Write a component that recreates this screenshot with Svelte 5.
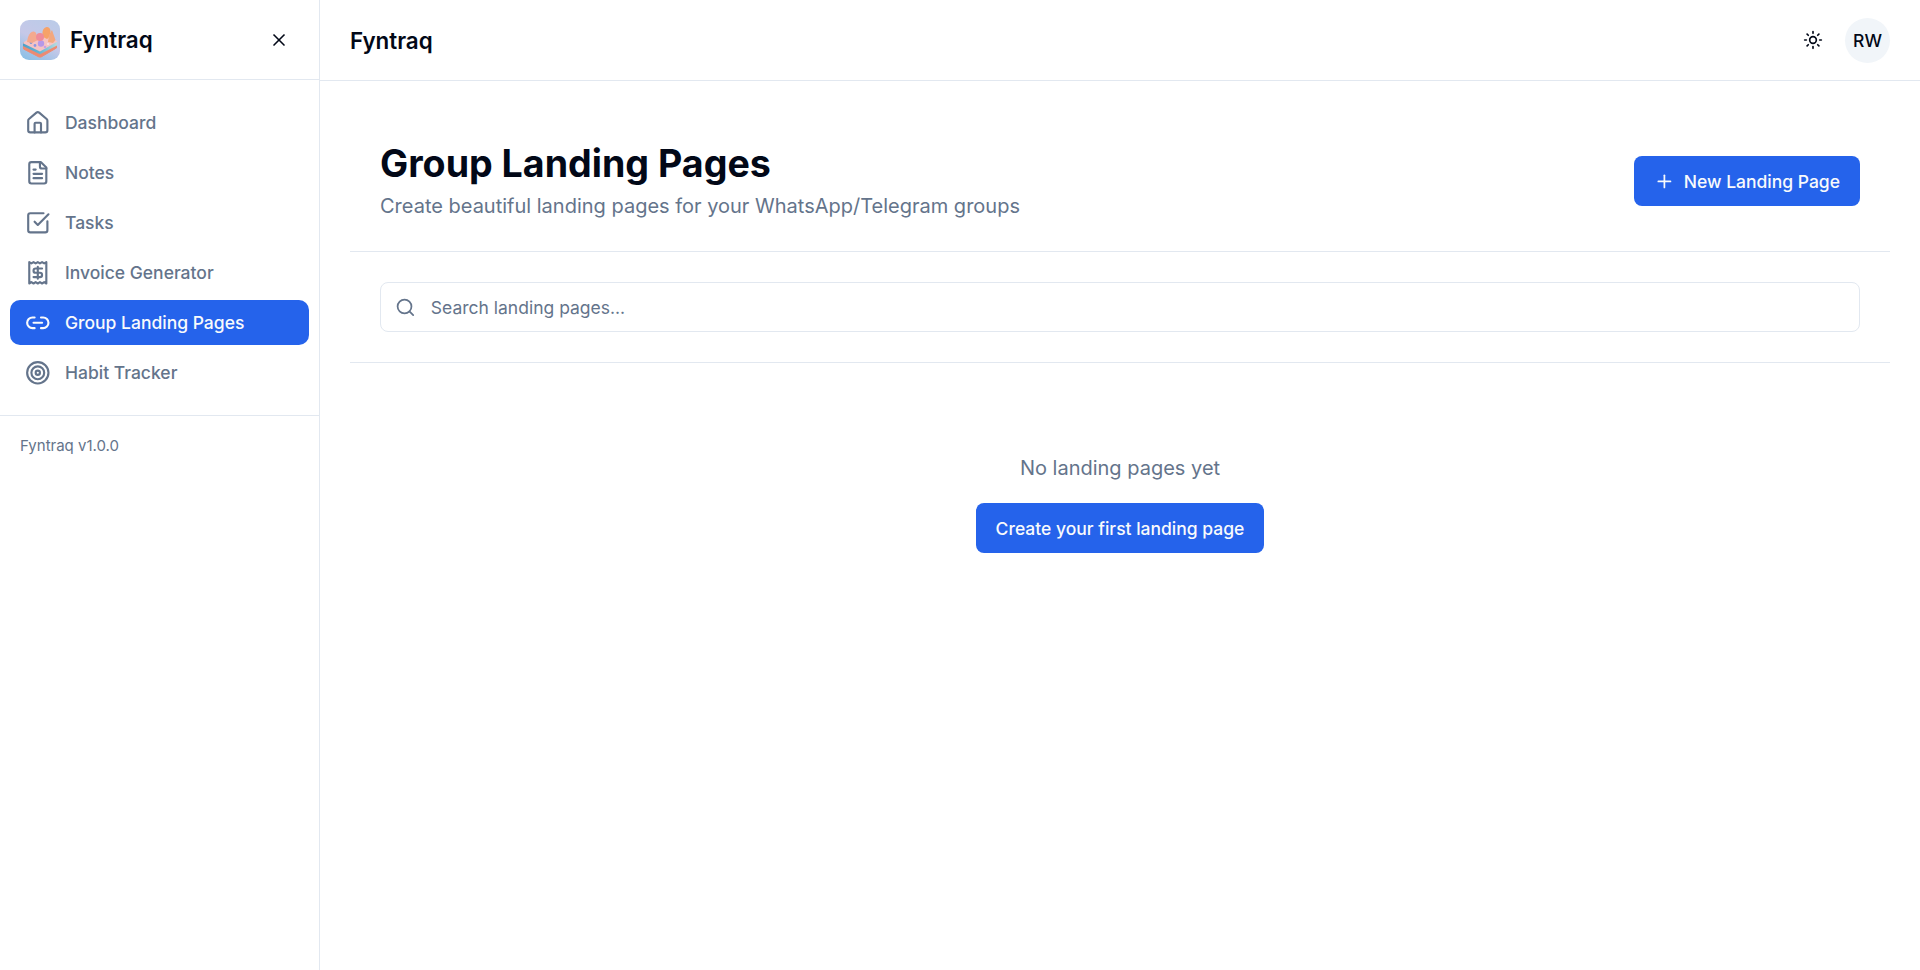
<script>
  const nav = ['Dashboard', 'Notes', 'Tasks', 'Invoice Generator', 'Group Landing Pages', 'Habit Tracker'];
</script>

<div class="shell">
  <aside class="sidebar">
    <div class="brand">
      <div class="brand-left">
        <svg class="logo" viewBox="0 0 40 40" aria-hidden="true">
          <defs>
            <linearGradient id="lg" x1="0.7" y1="0" x2="0.2" y2="1">
              <stop offset="0" stop-color="#bccbe8" />
              <stop offset="0.5" stop-color="#c6c8e8" />
              <stop offset="1" stop-color="#8dc0e6" />
            </linearGradient>
            <linearGradient id="lg2" x1="0" y1="0" x2="1" y2="0">
              <stop offset="0" stop-color="#4f9fc8" />
              <stop offset="0.5" stop-color="#66b6d2" />
              <stop offset="1" stop-color="#b5dadf" />
            </linearGradient>
            <clipPath id="lc"><rect width="40" height="40" rx="9" /></clipPath>
            <filter id="soft" x="-10%" y="-10%" width="120%" height="120%"><feGaussianBlur stdDeviation="0.45" /></filter>
          </defs>
          <g clip-path="url(#lc)">
            <rect width="40" height="40" fill="url(#lg)" />
            <g filter="url(#soft)">
              <path d="M3.5 26 L20 33 L36.5 25 L36.5 28 L21 37 L19 37 L3.5 29Z" fill="#ec8a72" stroke="#ec8a72" stroke-linejoin="round" />
              <path d="M3 22 L20 30 L37 21 L37 25.5 L20.5 34 L19.5 34 L3 26Z" fill="url(#lg2)" />
              <path d="M2.5 23 L15 15 L26 14 L37.5 21.5 L20 31.5Z" fill="#f6c3c4" />
              <circle cx="11" cy="22.5" r="1.4" fill="#6f93d6" />
              <circle cx="15" cy="25.5" r="1.4" fill="#8c98e2" />
              <circle cx="21" cy="23.5" r="3.2" fill="#b598e8" />
              <circle cx="25" cy="27" r="1.3" fill="#c79ee6" />
              <circle cx="28" cy="24" r="1.1" fill="#fbe0e4" />
              <path d="M23 17 C20 6 30 4 30.5 11 C30.5 15 29 18 27 19Z" fill="#f6a268" />
              <path d="M7 22 C8 13 13 9 16 13 L18 20 L12 23Z" fill="#f4a98e" />
              <circle cx="20" cy="17" r="4" fill="#ee8c9a" />
              <path d="M28 22 L29 15 L32 10 L35.5 20 L33 23Z" fill="#f3a87e" />
            </g>
          </g>
        </svg>
        <span class="brand-name">Fyntraq</span>
      </div>
      <svg class="close" viewBox="0 0 24 24" fill="none" stroke="currentColor" stroke-width="2" stroke-linecap="round" stroke-linejoin="round" aria-hidden="true">
        <path d="M18 6 6 18" /><path d="m6 6 12 12" />
      </svg>
    </div>

    <nav class="nav">
      {#each nav as item, i}
        <div class="nav-item" class:active={i === 4}>
          <svg class="nav-icon" viewBox="0 0 24 24" fill="none" stroke="currentColor" stroke-width="2" stroke-linecap="round" stroke-linejoin="round" aria-hidden="true">
            {#if i === 0}
              <path d="M15 21v-8a1 1 0 0 0-1-1h-4a1 1 0 0 0-1 1v8" />
              <path d="M3 10a2 2 0 0 1 .709-1.528l7-5.999a2 2 0 0 1 2.582 0l7 5.999A2 2 0 0 1 21 10v9a2 2 0 0 1-2 2H5a2 2 0 0 1-2-2z" />
            {:else if i === 1}
              <path d="M15 2H6a2 2 0 0 0-2 2v16a2 2 0 0 0 2 2h12a2 2 0 0 0 2-2V7Z" />
              <path d="M14 2v4a2 2 0 0 0 2 2h4" />
              <path d="M10 9H8" /><path d="M16 13H8" /><path d="M16 17H8" />
            {:else if i === 2}
              <path d="M21 10.656V19a2 2 0 0 1-2 2H5a2 2 0 0 1-2-2V5a2 2 0 0 1 2-2h12.344" />
              <path d="m9 11 3 3L22 4" />
            {:else if i === 3}
              <path d="M4 3v19l2-1.2 2 1.2 2-1.2 2 1.2 2-1.2 2 1.2 2-1.2 2 1.2V2l-2 1.2L16 2l-2 1.2L12 2l-2 1.2L8 2 6 3.2 4 2z" />
              <path d="M16 8h-6a2 2 0 1 0 0 4h4a2 2 0 1 1 0 4H8" />
              <path d="M12 17.5v-11" />
            {:else if i === 4}
              <path d="M9 17H7A5 5 0 0 1 7 7h2" />
              <path d="M15 7h2a5 5 0 1 1 0 10h-2" />
              <line x1="8" x2="16" y1="12" y2="12" />
            {:else}
              <circle cx="12" cy="12" r="10" /><circle cx="12" cy="12" r="6" /><circle cx="12" cy="12" r="2" />
            {/if}
          </svg>
          <span>{item}</span>
        </div>
      {/each}
    </nav>

    <div class="version">Fyntraq v1.0.0</div>
  </aside>

  <div class="content">
    <header class="topbar">
      <span class="top-title">Fyntraq</span>
      <div class="top-actions">
        <svg class="sun" viewBox="0 0 24 24" fill="none" stroke="currentColor" stroke-width="2" stroke-linecap="round" stroke-linejoin="round" aria-hidden="true">
          <circle cx="12" cy="12" r="4" />
          <path d="M12 2v2" /><path d="M12 20v2" /><path d="m4.93 4.93 1.41 1.41" /><path d="m17.66 17.66 1.41 1.41" />
          <path d="M2 12h2" /><path d="M20 12h2" /><path d="m6.34 17.66-1.41 1.41" /><path d="m19.07 4.93-1.41 1.41" />
        </svg>
        <div class="avatar">RW</div>
      </div>
    </header>

    <main class="main">
      <section class="page-head">
        <div>
          <h1>Group Landing Pages</h1>
          <p>Create beautiful landing pages for your WhatsApp/Telegram groups</p>
        </div>
        <button class="btn new">
          <svg viewBox="0 0 24 24" fill="none" stroke="currentColor" stroke-width="2" stroke-linecap="round" stroke-linejoin="round" aria-hidden="true">
            <path d="M5 12h14" /><path d="M12 5v14" />
          </svg>
          New Landing Page
        </button>
      </section>

      <section class="search-wrap">
        <div class="search">
          <svg viewBox="0 0 24 24" fill="none" stroke="currentColor" stroke-width="2" stroke-linecap="round" stroke-linejoin="round" aria-hidden="true">
            <path d="m21 21-4.34-4.34" /><circle cx="11" cy="11" r="8" />
          </svg>
          <span>Search landing pages...</span>
        </div>
      </section>

      <section class="empty">
        <p>No landing pages yet</p>
        <button class="btn">Create your first landing page</button>
      </section>
    </main>
  </div>
</div>

<style>
  :global(body) {
    margin: 0;
    background: #fff;
    font-family: Inter, "Liberation Sans", sans-serif;
    color: #020817;
  }
  .shell {
    display: flex;
    height: 970px;
    overflow: hidden;
  }
  .sidebar {
    width: 320px;
    flex: none;
    box-sizing: border-box;
    border-right: 1px solid #e2e8f0;
  }
  .brand {
    height: 80px;
    box-sizing: border-box;
    border-bottom: 1px solid #e2e8f0;
    display: flex;
    align-items: center;
    justify-content: space-between;
    padding: 0 30px 0 20px;
  }
  .brand-left {
    display: flex;
    align-items: center;
    gap: 10px;
  }
  .logo {
    width: 40px;
    height: 40px;
    display: block;
  }
  .brand-name {
    font-size: 22.4px;
    font-weight: 600;
    line-height: 28px;
  }
  .close {
    width: 20px;
    height: 20px;
    display: block;
  }
  .nav {
    padding: 20px 10px;
    display: flex;
    flex-direction: column;
    gap: 5px;
    border-bottom: 1px solid #e2e8f0;
  }
  .nav-item {
    height: 45px;
    box-sizing: border-box;
    display: flex;
    align-items: center;
    gap: 14.4px;
    padding: 0 15px;
    border-radius: 10px;
    font-size: 17.5px;
    font-weight: 500;
    color: #64748b;
  }
  .nav-item.active {
    background: #2563eb;
    color: #f8fafc;
  }
  .nav-icon {
    width: 25.6px;
    height: 25.6px;
    flex: none;
  }
  .version {
    padding: 20px;
    font-size: 15px;
    line-height: 20px;
    color: #64748b;
  }
  .content {
    flex: 1;
    min-width: 0;
  }
  .topbar {
    height: 81px;
    box-sizing: border-box;
    border-bottom: 1px solid #e2e8f0;
    display: flex;
    align-items: center;
    justify-content: space-between;
    padding: 0 30px;
  }
  .top-title {
    font-size: 22.4px;
    font-weight: 600;
  }
  .top-actions {
    display: flex;
    align-items: center;
    gap: 22px;
  }
  .sun {
    width: 20px;
    height: 20px;
    display: block;
  }
  .avatar {
    width: 45px;
    height: 45px;
    border-radius: 50%;
    background: #f1f5f9;
    display: flex;
    align-items: center;
    justify-content: center;
    font-size: 17.5px;
    font-weight: 500;
  }
  .main {
    padding: 0 30px;
  }
  .page-head {
    height: 171px;
    box-sizing: border-box;
    padding: 61px 30px 0;
    border-bottom: 1px solid #e2e8f0;
    display: flex;
    justify-content: space-between;
    align-items: flex-start;
  }
  h1 {
    margin: 0 0 5px;
    font-size: 37.6px;
    line-height: 44px;
    font-weight: 700;
  }
  .page-head p {
    margin: 0;
    font-size: 20px;
    line-height: 30px;
    color: #64748b;
  }
  .btn {
    height: 50px;
    box-sizing: border-box;
    border: 0;
    border-radius: 8px;
    background: #2563eb;
    color: #f8fafc;
    font-family: inherit;
    font-size: 17.5px;
    font-weight: 500;
    padding: 0 20px;
    display: inline-flex;
    align-items: center;
  }
  .btn svg {
    width: 20.8px;
    height: 20.8px;
    margin-right: 9px;
  }
  .new {
    margin-top: 14px;
  }
  .search-wrap {
    padding: 30px;
    border-bottom: 1px solid #e2e8f0;
  }
  .search {
    height: 50px;
    box-sizing: border-box;
    border: 1px solid #e2e8f0;
    border-radius: 8px;
    display: flex;
    align-items: center;
    gap: 15px;
    padding-left: 14px;
    font-size: 17.5px;
    color: #64748b;
  }
  .search svg {
    width: 20.8px;
    height: 20.8px;
  }
  .empty {
    padding-top: 90px;
    display: flex;
    flex-direction: column;
    align-items: center;
    gap: 20px;
  }
  .empty p {
    margin: 0;
    font-size: 20px;
    line-height: 30px;
    color: #64748b;
  }
</style>
